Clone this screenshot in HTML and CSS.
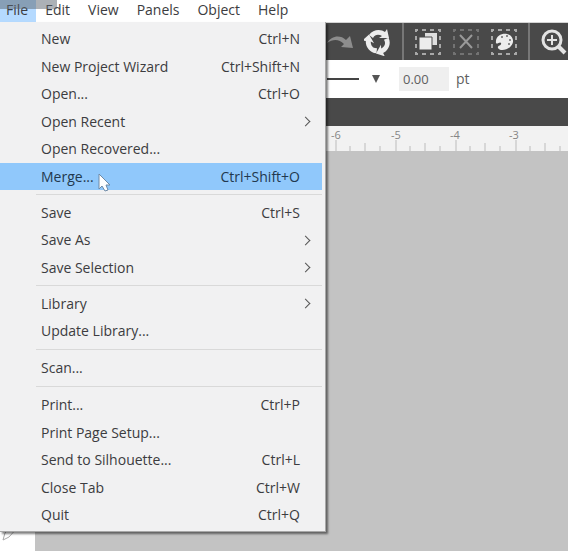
FILE: index.html
```
<!DOCTYPE html>
<html lang="en">
<head>
<meta charset="utf-8">
<title>Silhouette Studio</title>
<link rel="stylesheet" href="styles.css">
</head>
<body>
<div class="app">
  <nav class="menubar" aria-label="Main menu">
    <button class="menubar-item active">File</button>
    <button class="menubar-item">Edit</button>
    <button class="menubar-item">View</button>
    <button class="menubar-item">Panels</button>
    <button class="menubar-item">Object</button>
    <button class="menubar-item">Help</button>
    <span class="caption-shade"></span>
  </nav>

  <div class="toolbar">
    <button class="tool" aria-label="Redo">
      <svg width="28" height="28" viewBox="0 0 28 28"><path d="M1 15C5 8 14 6 20 12L24 8L27 20L15 19L18 16C13 11 7 11 1 15Z" fill="#8d8d8d"/></svg>
    </button>
    <button class="tool" aria-label="Refresh">
      <svg width="28" height="28" viewBox="0 0 28 28"><g fill="#ededed"><path id="arc" d="M5 7C9 1 17 1 21 4L23 1L25 10L15 10L18 8C15 6 11 6 9 10Z"/><use href="#arc" transform="rotate(120 14 14)"/><use href="#arc" transform="rotate(240 14 14)"/></g></svg>
    </button>
    <span class="divider"></span>
    <button class="tool" aria-label="Duplicate">
      <svg width="28" height="28" viewBox="0 0 28 28"><rect x="2" y="2" width="24" height="24" fill="none" stroke="#a8a8a8" stroke-width="2" stroke-dasharray="4 4" stroke-dashoffset="2"/><path d="M11 5H23V17H11Z" fill="#dedede"/><path d="M5 9H18V22H5Z" fill="#ededed" stroke="#4a4a4a"/></svg>
    </button>
    <button class="tool" aria-label="Delete">
      <svg width="28" height="28" viewBox="0 0 28 28"><rect x="2" y="2" width="24" height="24" fill="none" stroke="#737373" stroke-width="2" stroke-dasharray="4 4" stroke-dashoffset="2"/><path d="M8 7L20 20M20 7L8 20" stroke="#999" stroke-width="2"/></svg>
    </button>
    <button class="tool" aria-label="Fill colour">
      <svg width="28" height="28" viewBox="0 0 28 28"><rect x="2" y="2" width="24" height="24" fill="none" stroke="#a8a8a8" stroke-width="2" stroke-dasharray="4 4" stroke-dashoffset="2"/><path d="M6 15C5 8 12 5 17 6C23 7 25 14 21 18C17 23 9 23 8 20C7 17 12 18 11 15C10 13 7 17 6 15Z" fill="#ededed"/><g fill="#6a6a6a"><circle cx="12" cy="9" r="1"/><circle cx="17" cy="8" r="1"/><circle cx="20" cy="12" r="1"/><circle cx="19" cy="16" r="1"/></g></svg>
    </button>
    <span class="divider"></span>
    <button class="tool" aria-label="Zoom in">
      <svg width="28" height="28" viewBox="0 0 28 28"><circle cx="12" cy="12" r="9" fill="none" stroke="#e2e2e2" stroke-width="3"/><path d="M7 12H17M12 7V17" stroke="#e2e2e2" stroke-width="2"/><path d="M18 18L25 25" stroke="#e2e2e2" stroke-width="4"/></svg>
    </button>
  </div>

  <div class="options">
    <button class="line-style" aria-label="Line style"><span class="line"></span><svg width="10" height="8" viewBox="0 0 10 8"><path d="M1 0H9L5 8Z" fill="#555"/></svg></button>
    <input class="thickness" id="thickness" value="0.00">
    <label for="thickness">pt</label>
  </div>

  <div class="tabs"></div>

  <div class="ruler">
    <svg width="100%" height="25">
      <defs>
        <pattern id="ticks" x="335" y="0" width="60" height="25" patternUnits="userSpaceOnUse">
          <path d="M1 14V25M15 20V25M30 17V25M45 20V25" stroke="#bcbcbc" fill="none"/>
        </pattern>
      </defs>
      <rect width="100%" height="25" fill="url(#ticks)"/>
      <g class="ruler-label"><text x="336" y="13">-6</text><text x="396" y="13">-5</text><text x="455" y="13">-4</text><text x="514" y="13">-3</text></g>
    </svg>
  </div>

  <main class="work">
    <aside class="toolbox">
      <svg width="20" height="20" viewBox="0 0 20 20"><path d="M3 17L5 10L12 3L18 4L9 14Z" fill="none" stroke="#aaa"/></svg>
    </aside>
    <div class="canvas"></div>
  </main>

  <ul class="menu">
    <li><button class="entry">New<kbd>Ctrl+N</kbd></button></li>
    <li><button class="entry">New Project Wizard<kbd>Ctrl+Shift+N</kbd></button></li>
    <li><button class="entry">Open...<kbd>Ctrl+O</kbd></button></li>
    <li><button class="entry sub">Open Recent</button></li>
    <li><button class="entry">Open Recovered...</button></li>
    <li><button class="entry selected">Merge...<kbd>Ctrl+Shift+O</kbd></button></li>
    <li class="separator"></li>
    <li><button class="entry">Save<kbd>Ctrl+S</kbd></button></li>
    <li><button class="entry sub">Save As</button></li>
    <li><button class="entry sub">Save Selection</button></li>
    <li class="separator"></li>
    <li><button class="entry sub">Library</button></li>
    <li><button class="entry">Update Library...</button></li>
    <li class="separator"></li>
    <li><button class="entry">Scan...</button></li>
    <li class="separator"></li>
    <li><button class="entry">Print...<kbd>Ctrl+P</kbd></button></li>
    <li><button class="entry">Print Page Setup...</button></li>
    <li><button class="entry">Send to Silhouette...<kbd>Ctrl+L</kbd></button></li>
    <li><button class="entry">Close Tab<kbd>Ctrl+W</kbd></button></li>
    <li><button class="entry">Quit<kbd>Ctrl+Q</kbd></button></li>
  </ul>

  <svg class="pointer" width="14" height="20" viewBox="0 0 14 20"><path d="M1 1V16L4 13L7 18L10 17L8 12H12Z" fill="#fff" stroke="#6f8aa6"/></svg>
</div>
</body>
</html>
```
FILE: styles.css
```
* {
  box-sizing: border-box;
}

body {
  margin: 0;
  color: #3c3c40;
  font: 14px/20px "Open Sans", "Noto Sans", sans-serif;
}

button,
input,
kbd {
  margin: 0;
  padding: 0;
  border: 0;
  background: none;
  color: inherit;
  font: inherit;
}

.app {
  position: relative;
  display: flex;
  flex-direction: column;
  min-height: 100vh;
}

.menubar {
  position: relative;
  display: flex;
  height: 23px;
  background: #fff;
  border-bottom: 1px solid #d4d4d4;
}

.menubar-item {
  padding: 0 9px 2px;
}

.menubar-item.active {
  padding: 0 8px 2px 6px;
  background: #b5daff;
}

.caption-shade {
  position: absolute;
  top: 0;
  left: 0;
  width: 57px;
  height: 9px;
  background: rgb(90 100 110 / 50%);
}

.toolbar {
  display: flex;
  align-items: center;
  gap: 10px;
  height: 37px;
  padding-left: 326px;
  overflow: hidden;
  background: #494949;
}

.tool {
  flex: none;
  display: flex;
}

.divider {
  flex: none;
  width: 2px;
  height: 37px;
  background: #777;
}

.options {
  display: flex;
  align-items: center;
  height: 38px;
  padding-left: 327px;
  background: #fff;
  color: #606060;
}

.line-style {
  display: flex;
  align-items: center;
  gap: 12px;
}

.line {
  width: 32px;
  height: 2px;
  background: #444;
}

.thickness {
  width: 50px;
  height: 24px;
  margin: 0 7px 0 18px;
  padding-left: 4px;
  background: #efefef;
  font-size: 13px;
}

.tabs {
  height: 28px;
  background: #494949;
}

.ruler {
  height: 25px;
  background: #f2f2f2;
}

.ruler svg {
  display: block;
}

.ruler-label {
  fill: #858585;
  font-size: 11px;
  text-anchor: middle;
}

.work {
  flex: 1;
  display: flex;
}

.toolbox {
  display: flex;
  align-items: flex-end;
  width: 35px;
  padding-bottom: 8px;
  background: #fff;
}

.canvas {
  flex: 1;
  background: #c3c3c3;
}

.menu {
  position: absolute;
  top: 22px;
  left: 0;
  width: 326px;
  margin: 0;
  padding: 3px 3px 2px 0;
  list-style: none;
  background: #f1f1f2;
  border: solid #a8a8a8;
  border-width: 0 1px 1px 0;
  box-shadow: 2px 2px 2px rgb(0 0 0 / 50%);
}

.entry {
  display: flex;
  align-items: center;
  justify-content: space-between;
  width: 100%;
  height: 27px;
  padding: 0 22px 0 41px;
}

li:nth-child(odd) > .entry {
  height: 28px;
}

.entry.selected {
  background: #90c8fb;
  color: #22384e;
}

.entry.sub::after {
  width: 6px;
  height: 6px;
  margin-right: -9px;
  border: solid #555;
  border-width: 1px 1px 0 0;
  content: "";
  transform: rotate(45deg);
}

.separator {
  height: 9px;
  margin-left: 36px;
  background: linear-gradient(#d9d9d9, #d9d9d9) 0 4px / 100% 1px no-repeat;
}

.pointer {
  position: absolute;
  top: 173px;
  left: 98px;
}
```
